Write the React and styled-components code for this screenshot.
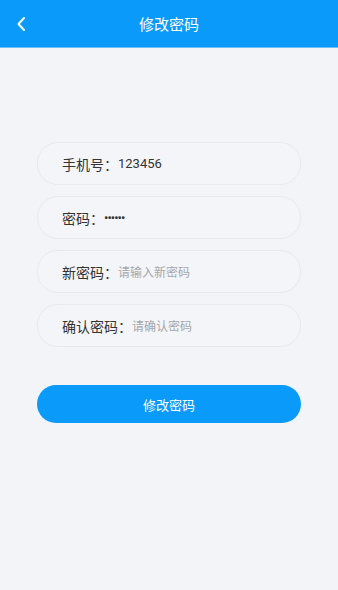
import React from "react";
import styled, { createGlobalStyle } from "styled-components";

const Global = createGlobalStyle`
  html, body { margin: 0; padding: 0; background: #f3f4f8; }
  body { font-family: "Noto Sans CJK SC", "Noto Sans", Roboto, sans-serif; }
  * { box-sizing: border-box; }
`;

const Page = styled.div`
  width: 338px;
  min-height: 590px;
  background: #f3f4f8;
  display: flex;
  flex-direction: column;
`;

const Header = styled.div`
  height: 48px;
  background: #0a9bfa;
  display: grid;
  grid-template-columns: 40px 1fr 40px;
  align-items: center;
  border-bottom: 1px solid #6cc3fb;
`;

const Back = styled.div`
  display: flex;
  align-items: center;
  justify-content: center;
  padding-left: 2px;
  height: 100%;
`;

const Title = styled.div`
  color: #fff;
  font-size: 15px;
  text-align: center;
  line-height: 1;
`;

const Form = styled.div`
  padding: 94px 37px 0 37px;
  display: flex;
  flex-direction: column;
  gap: 11px;
`;

const Row = styled.div`
  height: 43px;
  border-radius: 21px;
  background: #f4f5f9;
  border: 1px solid #e9eaee;
  display: flex;
  align-items: center;
  padding-left: 24px;
`;

const Label = styled.span`
  color: #333;
  font-size: 14px;
`;

const Value = styled.span`
  color: ${(p) => (p.$placeholder ? "#a5a7ab" : "#333")};
  font-size: ${(p) => (p.$placeholder ? "12px" : "13px")};
  font-family: ${(p) => (p.$placeholder ? '"Noto Sans CJK SC", sans-serif' : 'Roboto, "Noto Sans CJK SC", sans-serif')};
  letter-spacing: ${(p) => (p.$dots ? "-1px" : "0")};
`;

const Button = styled.button`
  margin: 38px 37px 0 37px;
  height: 38px;
  border: none;
  border-radius: 19px;
  background: #0a9bfa;
  color: #fff;
  font-size: 13px;
  font-family: "Noto Sans CJK SC", sans-serif;
`;

export default function App() {
  return (
    <Page>
      <Global />
      <Header>
        <Back>
          <svg width="10" height="16" viewBox="0 0 10 16">
            <path d="M8 2 L2.5 8 L8 14" stroke="#fff" strokeWidth="2" fill="none" strokeLinecap="round" strokeLinejoin="round" />
          </svg>
        </Back>
        <Title>修改密码</Title>
        <div />
      </Header>
      <Form>
        <Row>
          <Label>手机号：</Label>
          <Value>123456</Value>
        </Row>
        <Row>
          <Label>密码：</Label>
          <Value $dots>••••••</Value>
        </Row>
        <Row>
          <Label>新密码：</Label>
          <Value $placeholder>请输入新密码</Value>
        </Row>
        <Row>
          <Label>确认密码：</Label>
          <Value $placeholder>请确认密码</Value>
        </Row>
      </Form>
      <Button>修改密码</Button>
    </Page>
  );
}
